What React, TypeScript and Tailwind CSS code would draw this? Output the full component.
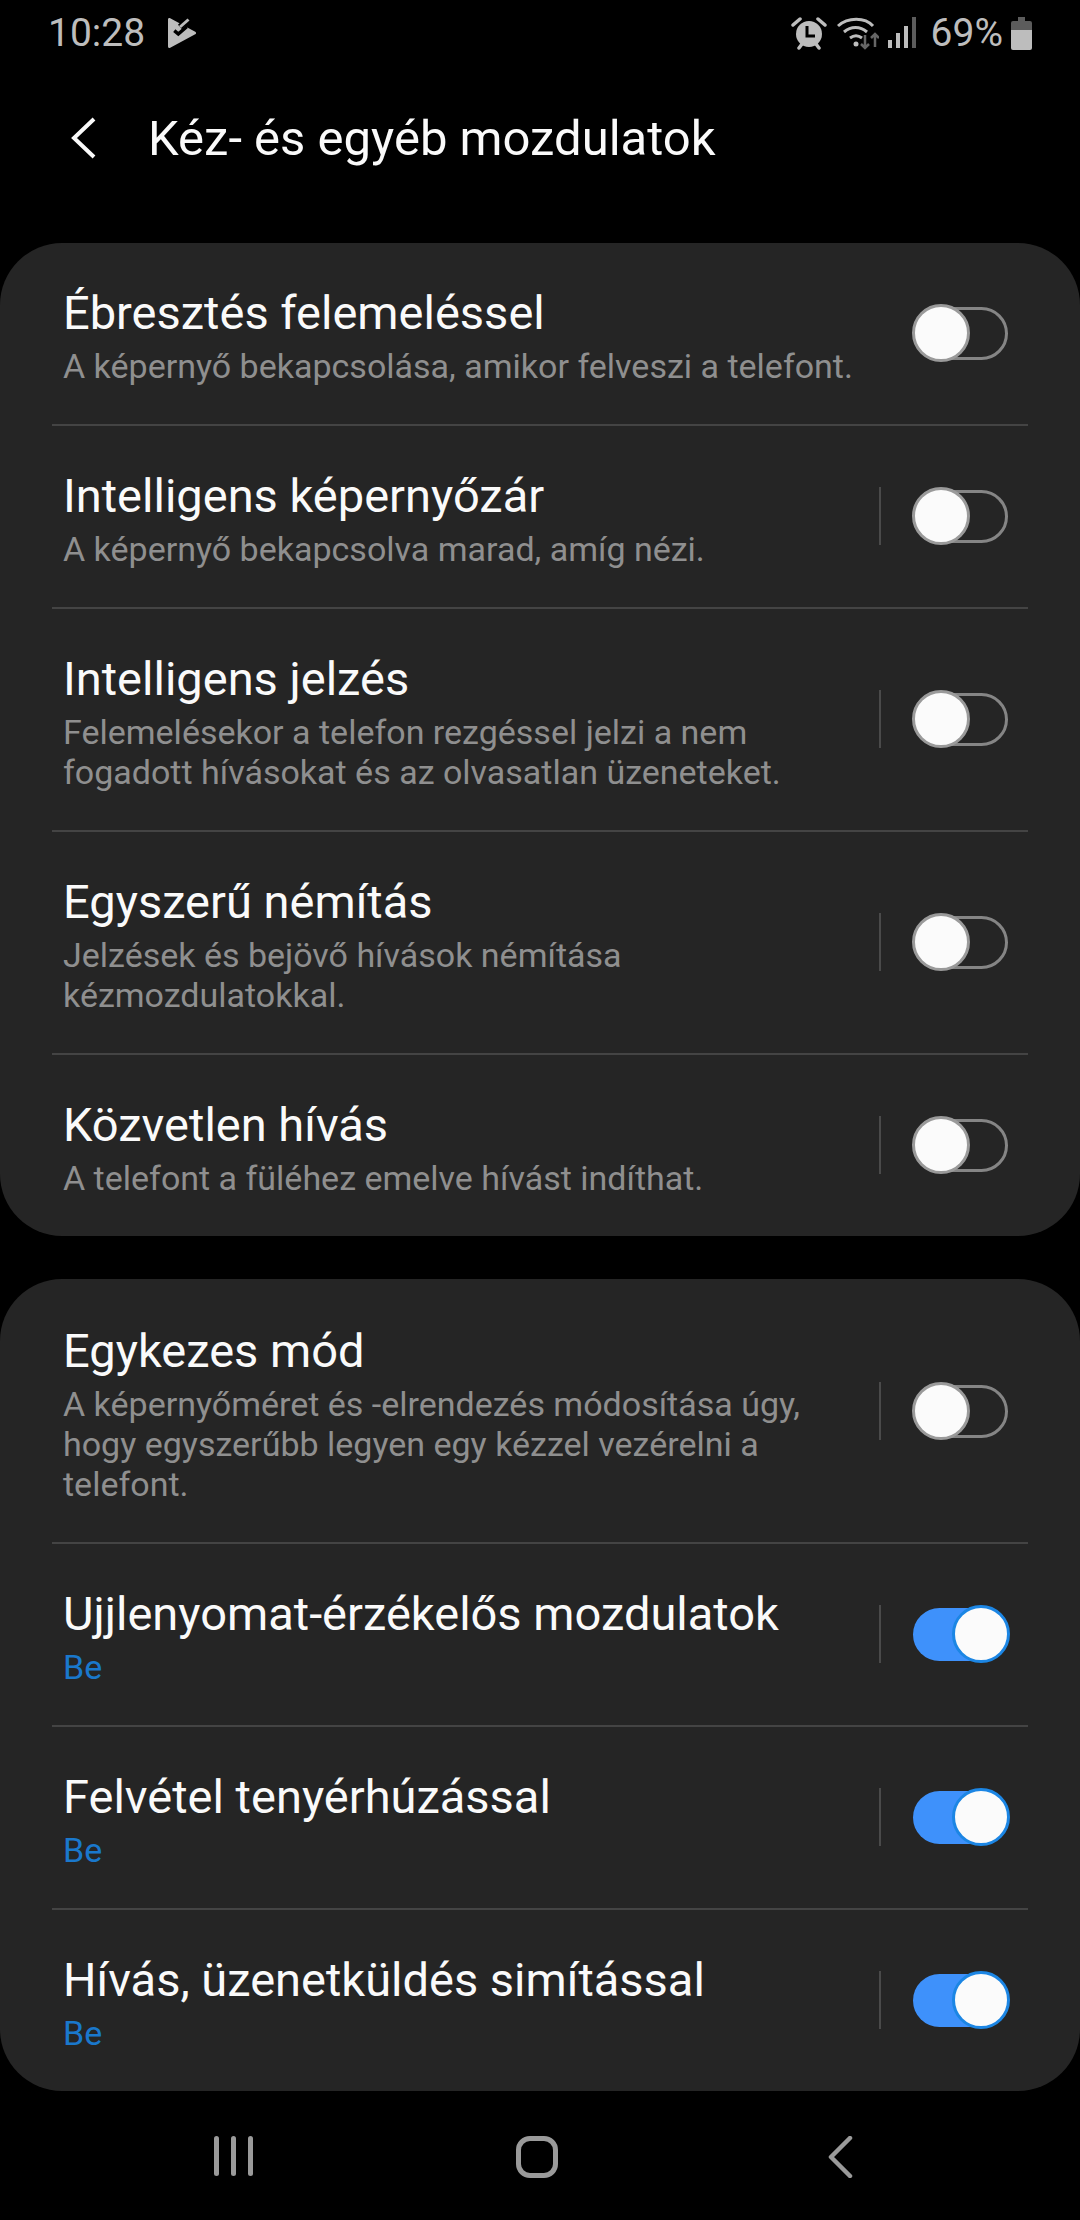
const cards = [
  [
    { title: "Ébresztés felemeléssel", sub: ["A képernyő bekapcsolása, amikor felveszi a telefont."], noSep: true },
    { title: "Intelligens képernyőzár", sub: ["A képernyő bekapcsolva marad, amíg nézi."] },
    { title: "Intelligens jelzés", sub: ["Felemelésekor a telefon rezgéssel jelzi a nem", "fogadott hívásokat és az olvasatlan üzeneteket."] },
    { title: "Egyszerű némítás", sub: ["Jelzések és bejövő hívások némítása", "kézmozdulatokkal."] },
    { title: "Közvetlen hívás", sub: ["A telefont a füléhez emelve hívást indíthat."] },
  ],
  [
    { title: "Egykezes mód", sub: ["A képernyőméret és -elrendezés módosítása úgy,", "hogy egyszerűbb legyen egy kézzel vezérelni a", "telefont."] },
    { title: "Ujjlenyomat-érzékelős mozdulatok", on: true },
    { title: "Felvétel tenyérhúzással", on: true },
    { title: "Hívás, üzenetküldés simítással", on: true },
  ],
];

type RowItem = { title: string; sub?: string[]; on?: boolean; noSep?: boolean };

function Toggle({ on }: { on?: boolean }) {
  if (on) {
    return (
      <div className="flex h-[53px] w-[95px] items-center justify-end rounded-full bg-[#3e91fb]">
        <div className="-mr-[2px] h-[58px] w-[58px] shrink-0 rounded-full border-[3px] border-[#1c86e4] bg-[#fbfbfb]" />
      </div>
    );
  }
  return (
    <div className="flex h-[53px] w-[95px] items-center rounded-full border-[3px] border-[#858585]">
      <div className="-ml-[4px] h-[58px] w-[58px] shrink-0 rounded-full border-[3px] border-[#9a9a9a] bg-[#fbfbfb]" />
    </div>
  );
}

function Row({ item, last }: { item: RowItem; last: boolean }) {
  return (
    <div className="px-[52px]">
      <div className={`flex items-center pt-[45px] pb-[38px] ${last ? "" : "border-b-2 border-[#444444]"}`}>
        <div className="flex-1 pl-[11px]">
          <div className="mb-[8px] text-[47px] leading-[50px] text-[#fafafa]">{item.title}</div>
          {item.on ? (
            <div className="text-[34px] leading-[40px] text-[#1a78cc]">Be</div>
          ) : (
            item.sub?.map((line) => (
              <div key={line} className="text-[34px] leading-[40px] text-[#8f8f8f]">
                {line}
              </div>
            ))
          )}
        </div>
        <div className="mb-[8px] flex items-center">
          {!item.noSep && <div className="h-[58px] w-[2px] bg-[#4a4a4a]" />}
          <div className="mr-[20px] ml-[32px]">
            <Toggle on={item.on} />
          </div>
        </div>
      </div>
    </div>
  );
}

function StatusIcons() {
  return (
    <div className="flex items-center">
      <svg width="36" height="34" viewBox="0 0 36 34" className="mr-[10px]">
        <circle cx="18" cy="18" r="13" fill="#bdbdbd" />
        <path d="M16 10v10h8" fill="none" stroke="#000" strokeWidth="3" />
        <path d="M2 9l7-6M34 9l-7-6M8 32l3-4M28 32l-3-4" stroke="#bdbdbd" strokeWidth="3.5" strokeLinecap="round" />
      </svg>
      <svg width="42" height="34" viewBox="0 0 42 34" className="mr-[9px]">
        <path d="M1 10C11 1 28 1 36 10M7 16c7-6 16-6 23 0M13 22c4-3 8-3 12 0" fill="none" stroke="#bdbdbd" strokeWidth="3" />
        <circle cx="19" cy="28" r="2.5" fill="#bdbdbd" />
        <path d="M28 19v13M24 28l4 4 4-4" fill="none" stroke="#666666" strokeWidth="2.5" />
        <path d="M38 31V18M34 22l4-4 4 4" fill="none" stroke="#666666" strokeWidth="2.5" />
      </svg>
      <svg width="28" height="32" viewBox="0 0 28 32" className="mr-[15px]">
        <rect x="0" y="23" width="4" height="8" fill="#bdbdbd" />
        <rect x="8" y="16" width="4" height="15" fill="#bdbdbd" />
        <rect x="16" y="9" width="4" height="22" fill="#bdbdbd" />
        <rect x="24" y="0" width="4" height="31" fill="#5c5c5c" />
      </svg>
      <span className="mr-[8px] text-[39px] leading-[44px] text-[#bdbdbd]">69%</span>
      <svg width="21" height="33" viewBox="0 0 21 33">
        <path d="M7 0h7v4h5a2 2 0 0 1 2 2v7H0V6a2 2 0 0 1 2-2h5z" fill="#5c5c5c" />
        <path d="M0 13h21v18a2 2 0 0 1-2 2H2a2 2 0 0 1-2-2z" fill="#bdbdbd" />
      </svg>
    </div>
  );
}

export default function App() {
  return (
    <div className="h-[2220px] w-[1080px] overflow-hidden bg-black font-['Roboto',sans-serif]">
      <div className="flex h-[66px] items-center justify-between pr-[48px] pl-[48px]">
        <div className="flex items-center">
          <span className="text-[39px] leading-[44px] text-[#bdbdbd]">10:28</span>
          <svg width="28" height="30" viewBox="0 0 28 30" className="ml-[23px]">
            <path d="M1.5 1.5V28.5L26.5 15z" fill="#bdbdbd" stroke="#bdbdbd" strokeWidth="3" strokeLinejoin="round" />
            <path d="M20 1.5L12 9" fill="none" stroke="#000" strokeWidth="6" />
            <path d="M6.3 12.7l4 3.3 8.4-7.3" fill="none" stroke="#000" strokeWidth="3.5" />
            <path d="M20.5 1.5L12 9" fill="none" stroke="#bdbdbd" strokeWidth="3" />
          </svg>
        </div>
        <StatusIcons />
      </div>

      <div className="flex h-[177px] items-start pt-[46px]">
        <svg width="26" height="42" viewBox="0 0 26 42" className="mt-[5px] ml-[70px]">
          <path d="M24 2L4 21l20 19" fill="none" stroke="#fafafa" strokeWidth="4" />
        </svg>
        <h1 className="ml-[52px] text-[49px] leading-[54px] font-normal text-[#fafafa]">Kéz- és egyéb mozdulatok</h1>
      </div>

      <div className="flex flex-col gap-[43px]">
        {cards.map((card, i) => (
          <div key={i} className={`rounded-[62px] bg-[#252525] ${i === 1 ? "pt-[2px]" : ""}`}>
            {card.map((item, j) => (
              <Row key={item.title} item={item} last={j === card.length - 1} />
            ))}
          </div>
        ))}
      </div>

      <div className="grid grid-cols-3 pt-[45px] pr-[89px] pl-[82px]">
        <div className="flex justify-center gap-[12px]">
          <div className="h-[40px] w-[5px] rounded-full bg-[#9a9a9a]" />
          <div className="h-[40px] w-[5px] rounded-full bg-[#9a9a9a]" />
          <div className="h-[40px] w-[5px] rounded-full bg-[#9a9a9a]" />
        </div>
        <div className="flex justify-center">
          <div className="h-[42px] w-[42px] rounded-[14px] border-[5px] border-[#9a9a9a]" />
        </div>
        <div className="flex justify-center">
          <svg width="26" height="42" viewBox="0 0 26 42">
            <path d="M23 2L4 21l19 19" fill="none" stroke="#9a9a9a" strokeWidth="4.5" strokeLinecap="round" strokeLinejoin="round" />
          </svg>
        </div>
      </div>
    </div>
  );
}
